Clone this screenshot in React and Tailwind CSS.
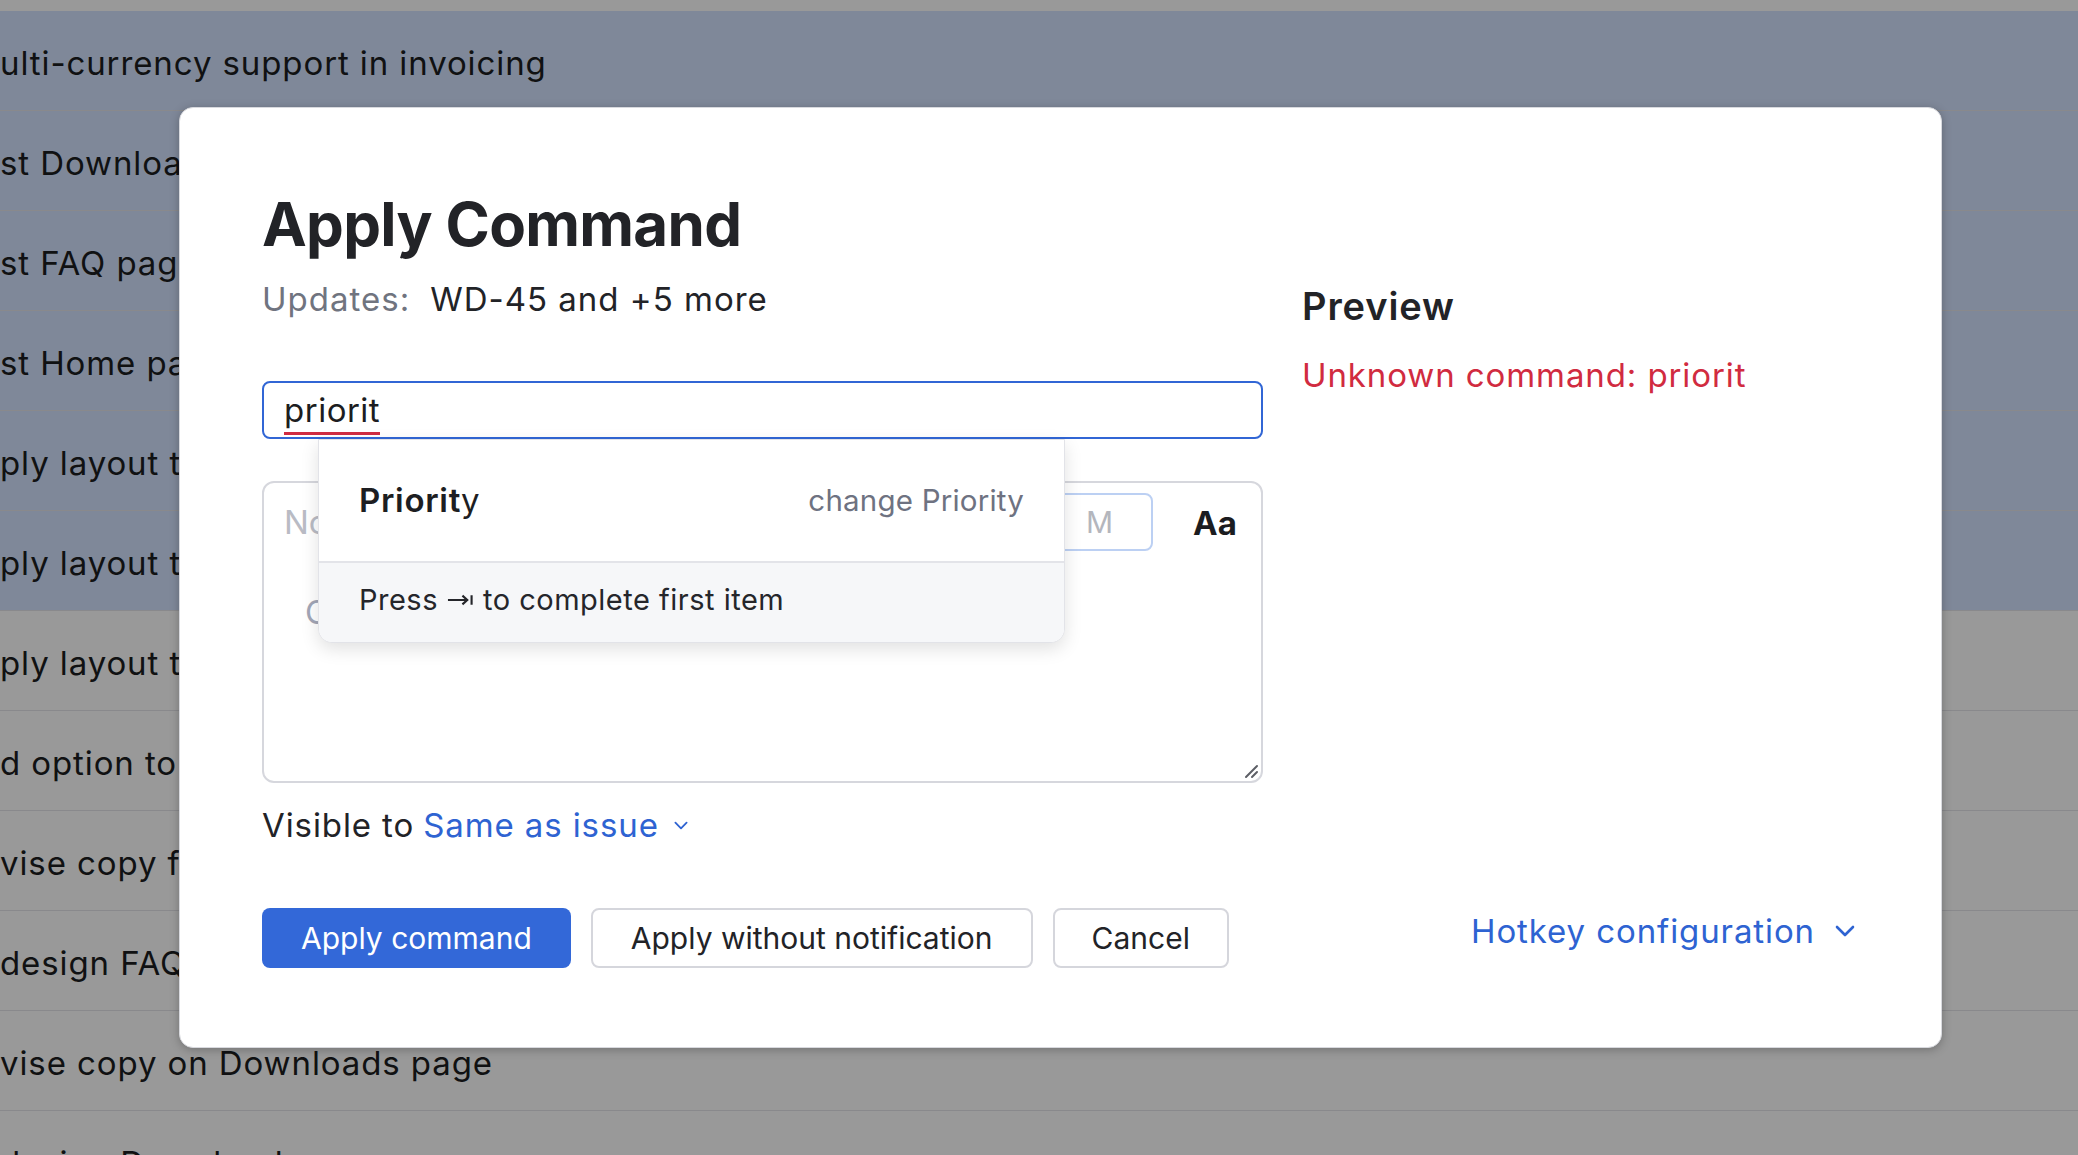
import React from 'react'

const rows = [
  { text: 'ulti-currency support in invoicing', selected: true },
  { text: 'st Download page layout', selected: true },
  { text: 'st FAQ page layout', selected: true },
  { text: 'st Home page layout', selected: true },
  { text: 'ply layout to Downloads page', selected: true },
  { text: 'ply layout to FAQ page', selected: true },
  { text: 'ply layout to Home page', selected: false },
  { text: 'd option to export reports', selected: false },
  { text: 'vise copy for FAQ page', selected: false },
  { text: 'design FAQ page', selected: false },
  { text: 'vise copy on Downloads page', selected: false },
  { text: 'design Downloads page', selected: false },
]

function Chevron({ className }) {
  return (
    <svg viewBox="0 0 20 12" fill="none" stroke="currentColor" strokeWidth="2.6" strokeLinecap="round" strokeLinejoin="round" className={className}>
      <polyline points="2,2 10,10 18,2" />
    </svg>
  )
}

export default function App() {
  return (
    <div className="relative w-[2078px] h-[1155px] overflow-hidden bg-white font-['Inter',sans-serif] text-[#1c1d21]">
      {/* ── page behind the dialog ── */}
      <div className="h-[11px] bg-white" />
      {rows.map((r, i) => (
        <div
          key={i}
          className={`h-[100px] border-b border-[#e4e5e9] flex items-center pt-[6px] text-[33px] tracking-[0.9px] whitespace-nowrap ${r.selected ? 'bg-[#d4e3ff]' : 'bg-white'}`}
        >
          {r.text}
        </div>
      ))}

      {/* ── overlay ── */}
      <div className="absolute inset-0 bg-black/40 pl-[179px] pt-[107px]">
        <div className="w-[1763px] h-[941px] rounded-[14px] bg-white shadow-[0_2px_10px_rgba(0,0,0,0.25)] border border-[#d8d9de] px-[82px] pt-[80px] flex">
          {/* left column */}
          <div className="w-[1001px] shrink-0">
            <h1 className="text-[60px] leading-[72px] font-bold text-[#222327] tracking-[-0.7px]">Apply Command</h1>
            <div className="mt-[19px] text-[33px] leading-[40px] tracking-[1px] flex gap-[20px]">
              <span className="text-[#70747f]">Updates:</span>
              <span className="text-[#222327]">WD-45 and +5 more</span>
            </div>

            {/* command input */}
            <div className="relative mt-[62px] h-[58px] border-2 border-[#3166d5] rounded-[8px] flex items-center pl-[20px] text-[33px] tracking-[0.5px]">
              <span className="relative leading-[40px]">
                priorit
                <span className="absolute left-0 right-0 bottom-[-5px] h-[3px] bg-[#d02c42]" />
              </span>

              {/* suggestions */}
              <div className="absolute top-[56px] left-[54px] w-[747px] z-20 bg-white rounded-b-[14px] border border-[#e2e3e8] shadow-[0_6px_18px_rgba(0,0,0,0.12)] overflow-hidden">
                <div className="h-[121px] flex items-center justify-between pl-[40px] pr-[40px]">
                  <span className="text-[33px] tracking-[0.7px] text-[#1d1e22]">
                    <span className="font-semibold">Priorit</span>y
                  </span>
                  <span className="text-[29.5px] tracking-[0.2px] text-[#6e7281]">change Priority</span>
                </div>
                <div className="h-[81px] pb-[5px] border-t-2 border-[#e3e4e9] bg-[#f6f7f9] flex items-center pl-[40px] text-[29px] tracking-[0.5px] text-[#25262b]">
                  Press
                  <svg viewBox="0 0 28 12" className="w-[27px] h-[12px] mx-[9px]" fill="none" stroke="currentColor" strokeWidth="2.2">
                    <line x1="1" y1="6" x2="21" y2="6" />
                    <polyline points="16,1.5 21,6 16,10.5" strokeLinejoin="miter" />
                    <line x1="25.5" y1="1" x2="25.5" y2="11" />
                  </svg>
                  to complete first item
                </div>
              </div>
            </div>

            {/* comment area */}
            <div className="relative mt-[42px] h-[302px] border-2 border-[#d6d7dd] rounded-[12px]">
              <div className="absolute left-[20px] top-[19px] text-[33px] leading-[40px] text-[#b9bbc4]">Nothing</div>
              <div className="absolute left-[41px] top-[109px] text-[33px] leading-[40px] text-[#a2a6b6]">C</div>
              <div className="absolute left-[700px] top-[10px] w-[189px] h-[58px] border-2 border-[#bcd0f3] rounded-[8px] flex items-center justify-end pr-[38px] text-[30px] text-[#b4b6bd]">
                M
              </div>
              <div className="absolute left-[929px] top-[20px] text-[33px] leading-[40px] font-bold text-[#1b1c20]">Aa</div>
              <svg viewBox="0 0 16 16" className="absolute right-[2px] bottom-[2px] w-[16px] h-[16px]" stroke="#5d5f66" strokeWidth="2" strokeLinecap="round">
                <line x1="3" y1="14" x2="14" y2="3" />
                <line x1="9" y1="14" x2="14" y2="9" />
              </svg>
            </div>

            <div className="mt-[22px] text-[33px] leading-[40px] tracking-[0.9px] flex items-center">
              <span className="text-[#222327]">Visible to</span>
              <span className="ml-[9px] text-[#2e63d2]">Same as issue</span>
              <Chevron className="ml-[15px] w-[14px] h-[9px] text-[#2e63d2]" />
            </div>

            <div className="mt-[63px] flex gap-[20px]">
              <button className="h-[60px] px-[39px] rounded-[8px] bg-[#3368d8] text-white text-[30px]">Apply command</button>
              <button className="h-[60px] px-[38px] rounded-[8px] border-2 border-[#d5d6dc] text-[30px] text-[#222327]">Apply without notification</button>
              <button className="h-[60px] px-[37px] rounded-[8px] border-2 border-[#d5d6dc] text-[30px] text-[#222327]">Cancel</button>
            </div>
          </div>

          {/* right column */}
          <div className="ml-[39px] flex-1 flex flex-col pb-[96px]">
            <div className="pt-[95px] text-[38px] leading-[46px] font-semibold tracking-[0.9px] text-[#222327]">Preview</div>
            <div className="mt-[26px] text-[33px] leading-[40px] tracking-[0.9px] text-[#d12b40]">Unknown command: priorit</div>
            <div className="mt-auto ml-[169px] flex items-center text-[33px] leading-[40px] tracking-[0.9px] text-[#2e63d2]">
              Hotkey configuration
              <Chevron className="ml-[20px] w-[20px] h-[12px]" />
            </div>
          </div>
        </div>
      </div>
    </div>
  )
}
